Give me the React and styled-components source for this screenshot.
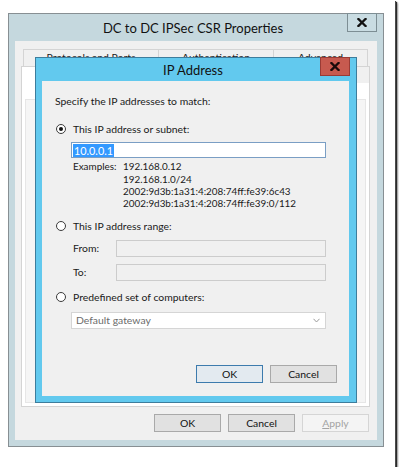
import React from 'react';
import styled, { createGlobalStyle } from 'styled-components';

const GlobalStyle = createGlobalStyle`
  html, body {
    margin: 0;
    padding: 0;
    background: #ffffff;
  }
  body {
    font-family: Lato, "Liberation Sans", sans-serif;
    font-size: 10.4px;
    color: #1a1a1a;
  }
  * {
    box-sizing: border-box;
  }
`;

const Canvas = styled.div`
  position: relative;
  width: 395px;
  height: 467px;
  padding: 13px 0 0 8px;
  background: #ffffff;
  box-shadow: 1px 1px 0 #4a4a4a, 2px 2px 1px #2a2a2a, 3px 3px 2px rgba(0, 0, 0, 0.35);
`;

const Window = styled.div`
  display: flex;
  flex-direction: column;
  width: ${({ $w }) => $w}px;
  height: ${({ $h }) => $h}px;
  border: 1px solid ${({ $edge }) => $edge};
  background: ${({ $frame }) => $frame};
`;

// the modal sits over the properties window, like a window on a desktop
const Dialog = styled(Window)`
  position: absolute;
  left: 35px;
  top: 57px;
`;

const TitleBar = styled.div`
  display: grid;
  grid-template-columns: 1fr auto 1fr;
  align-items: center;
  height: ${({ $h }) => $h}px;
  padding-right: 6px;
`;

const Title = styled.div`
  grid-column: 2;
  font-size: 13px;
  color: #111;
  white-space: nowrap;
`;

const CloseButton = styled.div`
  grid-column: 3;
  justify-self: end;
  align-self: start;
  margin-top: -1px;
  display: flex;
  align-items: center;
  justify-content: center;
  width: 30px;
  height: 19px;
  border: 1px solid ${({ $red }) => ($red ? '#9a3b35' : '#7d8e94')};
  background: ${({ $red }) => ($red ? '#c75a4f' : '#c9dce2')};
`;

const Client = styled.div`
  flex: 1;
  display: flex;
  flex-direction: column;
  margin: ${({ $m }) => $m};
  padding: ${({ $p }) => $p};
  background: #f0f0f0;
`;

const TabRow = styled.div`
  display: flex;
  height: 17px;
  padding: ${({ $inset }) => `0 ${$inset}px`};
`;

const Tab = styled.div`
  width: ${({ $w }) => ($w ? `${$w}px` : 'auto')};
  flex: ${({ $w }) => ($w ? 'none' : 1)};
  padding-top: 1px;
  text-align: center;
  font-size: 10.4px;
  color: #222;
  border: 1px solid #d4d4d4;
  border-bottom: none;
  border-right-width: ${({ $last }) => ($last ? 1 : 0)}px;
  background: ${({ $active }) => ($active ? '#ffffff' : '#f0f0f0')};
  white-space: nowrap;
  overflow: hidden;
`;

const TabPage = styled.div`
  flex: 1;
  padding: 3px;
  border: 1px solid #d4d4d4;
  border-top: none;
  background: #ffffff;
`;

const TabPanel = styled.div`
  height: calc(100% - 13px);
  margin-top: 13px;
  background: #f5f5f5;
  border: 1px solid #e6e6e6;
`;

const ButtonRow = styled.div`
  display: flex;
  justify-content: flex-end;
  gap: 7px;
  margin: ${({ $m }) => $m};
`;

const Button = styled.div`
  display: flex;
  align-items: center;
  justify-content: center;
  width: 67px;
  height: 18px;
  font-size: 10.4px;
  color: ${({ $disabled }) => ($disabled ? '#a3a3a3' : '#111')};
  border: 1px solid ${({ $default, $disabled }) => ($default ? '#3d7bad' : $disabled ? '#d5d5d5' : '#a9a9a9')};
  background: ${({ $default, $disabled }) => ($default ? '#e3eaf0' : $disabled ? '#f4f4f4' : '#e1e1e1')};

  u {
    text-decoration-thickness: 1px;
    text-underline-offset: 1px;
  }
`;

const Line = styled.div`
  display: flex;
  align-items: center;
  height: ${({ $h }) => $h || 13}px;
  margin-top: ${({ $mt }) => $mt || 0}px;
  margin-left: ${({ $ml }) => $ml || 0}px;
  white-space: nowrap;
`;

const RadioCircle = styled.span`
  display: flex;
  align-items: center;
  justify-content: center;
  width: 10px;
  height: 10px;
  margin: 0 7px 0 1px;
  border: 1px solid #3b3b3b;
  border-radius: 50%;
  background: #ffffff;

  &::after {
    content: '';
    width: 4px;
    height: 4px;
    border-radius: 50%;
    background: ${({ $checked }) => ($checked ? '#111' : 'transparent')};
  }
`;

const TextBox = styled.div`
  display: flex;
  align-items: center;
  width: ${({ $w }) => $w}px;
  height: ${({ $h }) => $h || 16}px;
  padding: 0 1px;
  border: 1px solid ${({ $focus, $disabled }) => ($focus ? '#7a9ec4' : $disabled ? '#cccccc' : '#d5d5d5')};
  background: ${({ $disabled }) => ($disabled ? '#f0f0f0' : '#ffffff')};
  color: #6b6b6b;
`;

const Selected = styled.span`
  padding: 0 1px;
  line-height: 13px;
  background: #3399ff;
  color: #ffffff;
  font-size: 10.8px;
`;

const Examples = styled.div`
  display: grid;
  grid-template-columns: 50px auto;
  grid-auto-rows: 12.4px;
  align-items: center;
  margin: 2px 0 0 18px;
  font-size: 9.9px;
  color: #1a1a1a;
`;

const FieldLabel = styled.span`
  width: 43px;
`;

const Chevron = styled.svg`
  margin-left: auto;
  margin-right: 4px;
`;

const Cross = ({ color }) => (
  <svg width="10" height="9" viewBox="0 0 10 9">
    <path d="M1.5 1 L8.5 8 M8.5 1 L1.5 8" stroke={color} strokeWidth="2.3" strokeLinecap="square" />
  </svg>
);

const Radio = ({ checked, children, mt }) => (
  <Line $mt={mt}>
    <RadioCircle $checked={checked} />
    {children}
  </Line>
);

const exampleRows = [
  ['Examples:', '192.168.0.12'],
  ['', '192.168.1.0/24'],
  ['', '2002:9d3b:1a31:4:208:74ff:fe39:6c43'],
  ['', '2002:9d3b:1a31:4:208:74ff:fe39:0/112'],
];

export default function App() {
  return (
    <>
      <GlobalStyle />
      <Canvas>
        <Window $w={376} $h={434} $edge="#878f93" $frame="#c5d8de">
          <TitleBar $h={27}>
            <Title>DC to DC IPSec CSR Properties</Title>
            <CloseButton>
              <Cross color="#111" />
            </CloseButton>
          </TitleBar>
          <Client $m="0 6px 6px 6px" $p="8px 7px 8px 6px">
            <TabRow $inset={2}>
              <Tab $w={135}>Protocols and Ports</Tab>
              <Tab $w={115}>Authentication</Tab>
              <Tab $w={95} $last>Advanced</Tab>
            </TabRow>
            {/* front row of tabs, hidden behind the modal */}
            <TabRow $inset={0}>
              <Tab $w={120} $active />
              <Tab $w={110} />
              <Tab $last />
            </TabRow>
            <TabPage>
              <TabPanel />
            </TabPage>
            <ButtonRow $m="7px 1px 0 0">
              <Button>OK</Button>
              <Button>Cancel</Button>
              <Button $disabled>
                <span>
                  <u>A</u>pply
                </span>
              </Button>
            </ButtonRow>
          </Client>
        </Window>

        <Dialog $w={322} $h={346} $edge="#3d7d9c" $frame="#62c9ee">
          <TitleBar $h={23}>
            <Title>IP Address</Title>
            <CloseButton $red>
              <Cross color="#1a0b0b" />
            </CloseButton>
          </TitleBar>
          <Client $m="0 7px 6px 6px" $p="13px 0 0 13px">
            <Line>Specify the IP addresses to match:</Line>
            <Radio checked mt={15}>
              This IP address or subnet:
            </Radio>
            <Line $mt={7} $ml={16} $h={16}>
              <TextBox $w={255} $focus>
                <Selected>10.0.0.1</Selected>
              </TextBox>
            </Line>
            <Examples>
              {exampleRows.map(([label, value], i) => (
                <React.Fragment key={i}>
                  <span>{label}</span>
                  <span>{value}</span>
                </React.Fragment>
              ))}
            </Examples>
            <Radio mt={10}>This IP address range:</Radio>
            <Line $mt={7} $ml={18} $h={17}>
              <FieldLabel>From:</FieldLabel>
              <TextBox $w={210} $h={17} $disabled />
            </Line>
            <Line $mt={7} $ml={18} $h={17}>
              <FieldLabel>To:</FieldLabel>
              <TextBox $w={210} $h={17} $disabled />
            </Line>
            <Radio mt={10}>Predefined set of computers:</Radio>
            <Line $mt={8} $ml={16} $h={17}>
              <TextBox $w={255} $h={17}>
                <span style={{ paddingLeft: 3 }}>Default gateway</span>
                <Chevron width="7" height="5" viewBox="0 0 7 5">
                  <path d="M0.5 0.8 L3.5 4 L6.5 0.8" fill="none" stroke="#9a9a9a" strokeWidth="1" />
                </Chevron>
              </TextBox>
            </Line>
            <ButtonRow $m="36px 12px 0 0">
              <Button $default>OK</Button>
              <Button>Cancel</Button>
            </ButtonRow>
          </Client>
        </Dialog>
      </Canvas>
    </>
  );
}
